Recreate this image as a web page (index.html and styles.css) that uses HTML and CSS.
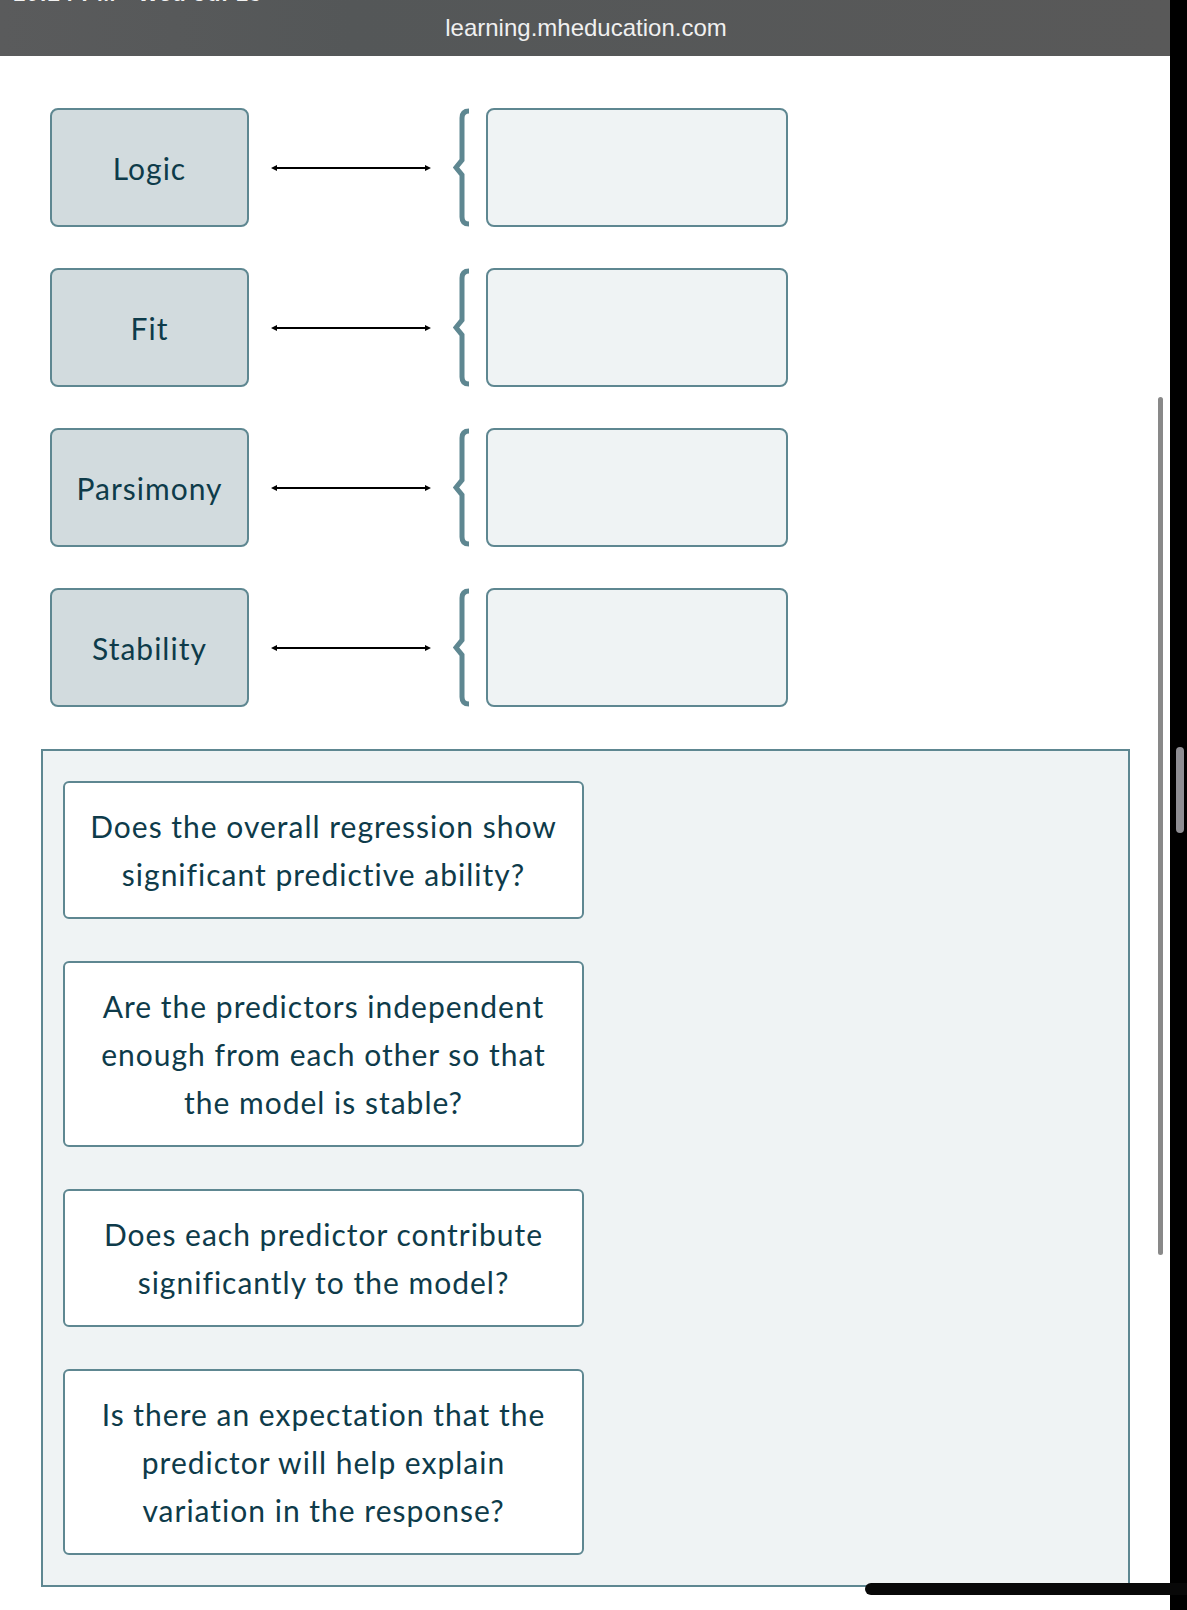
FILE: index.html
```html
<!DOCTYPE html>
<html>
<head>
<meta charset="utf-8">
<link rel="stylesheet" href="styles.css">
</head>
<body>
<div class="screen">
  <div class="main">
    <header class="topbar">
      <div class="status">10:24 PM&nbsp;&nbsp;&nbsp;Wed Jul 13</div>
      <div class="url">learning.mheducation.com</div>
    </header>
    <div class="content">
      <div class="rows">
        <div class="row">
          <div class="label">Logic</div>
          <svg class="arrow" width="160" height="10" viewBox="0 0 160 10"><line x1="4" y1="5" x2="156" y2="5" stroke="#000" stroke-width="2"/><path d="M0 5 L6 2 L6 8 Z M160 5 L154 2 L154 8 Z" fill="#000"/></svg>
          <svg class="brace" width="18" height="119" viewBox="0 0 18 119"><path d="M16 3 Q9 3 9 10 L9 52 L3 59.5 L9 67 L9 109 Q9 116 16 116" fill="none" stroke="#5e8791" stroke-width="5"/></svg>
          <div class="drop"></div>
        </div>
        <div class="row">
          <div class="label">Fit</div>
          <svg class="arrow" width="160" height="10" viewBox="0 0 160 10"><line x1="4" y1="5" x2="156" y2="5" stroke="#000" stroke-width="2"/><path d="M0 5 L6 2 L6 8 Z M160 5 L154 2 L154 8 Z" fill="#000"/></svg>
          <svg class="brace" width="18" height="119" viewBox="0 0 18 119"><path d="M16 3 Q9 3 9 10 L9 52 L3 59.5 L9 67 L9 109 Q9 116 16 116" fill="none" stroke="#5e8791" stroke-width="5"/></svg>
          <div class="drop"></div>
        </div>
        <div class="row">
          <div class="label">Parsimony</div>
          <svg class="arrow" width="160" height="10" viewBox="0 0 160 10"><line x1="4" y1="5" x2="156" y2="5" stroke="#000" stroke-width="2"/><path d="M0 5 L6 2 L6 8 Z M160 5 L154 2 L154 8 Z" fill="#000"/></svg>
          <svg class="brace" width="18" height="119" viewBox="0 0 18 119"><path d="M16 3 Q9 3 9 10 L9 52 L3 59.5 L9 67 L9 109 Q9 116 16 116" fill="none" stroke="#5e8791" stroke-width="5"/></svg>
          <div class="drop"></div>
        </div>
        <div class="row">
          <div class="label">Stability</div>
          <svg class="arrow" width="160" height="10" viewBox="0 0 160 10"><line x1="4" y1="5" x2="156" y2="5" stroke="#000" stroke-width="2"/><path d="M0 5 L6 2 L6 8 Z M160 5 L154 2 L154 8 Z" fill="#000"/></svg>
          <svg class="brace" width="18" height="119" viewBox="0 0 18 119"><path d="M16 3 Q9 3 9 10 L9 52 L3 59.5 L9 67 L9 109 Q9 116 16 116" fill="none" stroke="#5e8791" stroke-width="5"/></svg>
          <div class="drop"></div>
        </div>
      </div>
      <div class="panel">
        <div class="card">Does the overall regression show significant predictive ability?</div>
        <div class="card">Are the predictors independent enough from each other so that the model is stable?</div>
        <div class="card">Does each predictor contribute significantly to the model?</div>
        <div class="card">Is there an expectation that the predictor will help explain variation in the response?</div>
      </div>
    </div>
    <div class="scrollline"></div>
  </div>
  <div class="edge">
    <div class="pill"></div>
  </div>
  <div class="home"></div>
</div>
</body>
</html>
```

FILE: styles.css
```css
html, body {
  margin: 0;
  padding: 0;
  background: #fff;
}
.screen {
  position: relative;
  display: flex;
  width: 1187px;
  height: 1610px;
  overflow: hidden;
}
.main {
  position: relative;
  width: 1170px;
  flex: none;
  background: #fff;
}
.edge {
  position: relative;
  flex: 1;
  background: #000;
}
.pill {
  position: absolute;
  left: 6px;
  top: 747px;
  width: 8px;
  height: 86px;
  border-radius: 4px;
  background: #8e8d93;
}
.topbar {
  height: 56px;
  background: linear-gradient(90deg, #5a5b5c 0%, #545758 30%, #595959 100%);
  position: relative;
  overflow: hidden;
  display: flex;
  justify-content: center;
  align-items: center;
}
.status {
  position: absolute;
  left: 13px;
  top: -19px;
  font-family: "Liberation Sans", Arial, sans-serif;
  font-size: 22px;
  color: #f2f2f2;
  font-weight: bold;
  letter-spacing: 1px;
}
.url {
  font-family: "Liberation Sans", Arial, sans-serif;
  font-size: 24px;
  color: #f0f0f0;
  margin-left: 2px;
}
.content {
  padding: 52px 0 0 0;
}
.rows {
  display: flex;
  flex-direction: column;
  gap: 41px;
  padding-left: 50px;
}
.row {
  display: flex;
  align-items: center;
  height: 119px;
}
.label {
  box-sizing: border-box;
  width: 199px;
  height: 119px;
  background: #d2dbde;
  border: 2px solid #5e8791;
  border-radius: 8px;
  display: flex;
  align-items: center;
  justify-content: center;
  font-family: Lato, "Open Sans", sans-serif;
  font-size: 30px;
  letter-spacing: 1px;
  color: #0e3b4a;
}
.arrow {
  margin-left: 22px;
  flex: none;
}
.brace {
  margin-left: 22px;
  flex: none;
}
.drop {
  box-sizing: border-box;
  margin-left: 15px;
  width: 302px;
  height: 119px;
  background: #eff3f4;
  border: 2px solid #5e8791;
  border-radius: 8px;
}
.panel {
  box-sizing: border-box;
  margin: 42px 0 0 41px;
  width: 1089px;
  height: 838px;
  background: #eff3f4;
  border: 2px solid #5e8791;
  padding: 30px 0 0 20px;
  display: flex;
  flex-direction: column;
  align-items: flex-start;
  gap: 42px;
}
.card {
  box-sizing: border-box;
  width: 521px;
  background: #fff;
  border: 2px solid #5e8791;
  border-radius: 6px;
  padding: 19px 20px;
  text-align: center;
  font-family: Lato, "Open Sans", sans-serif;
  font-size: 30px;
  letter-spacing: 1px;
  line-height: 48px;
  color: #0e3b4a;
}
.scrollline {
  position: absolute;
  left: 1158px;
  top: 397px;
  width: 5px;
  height: 858px;
  border-radius: 3px;
  background: #898989;
}
.home {
  position: absolute;
  left: 865px;
  top: 1583px;
  width: 340px;
  height: 12px;
  border-radius: 6px;
  background: #080808;
}
```
